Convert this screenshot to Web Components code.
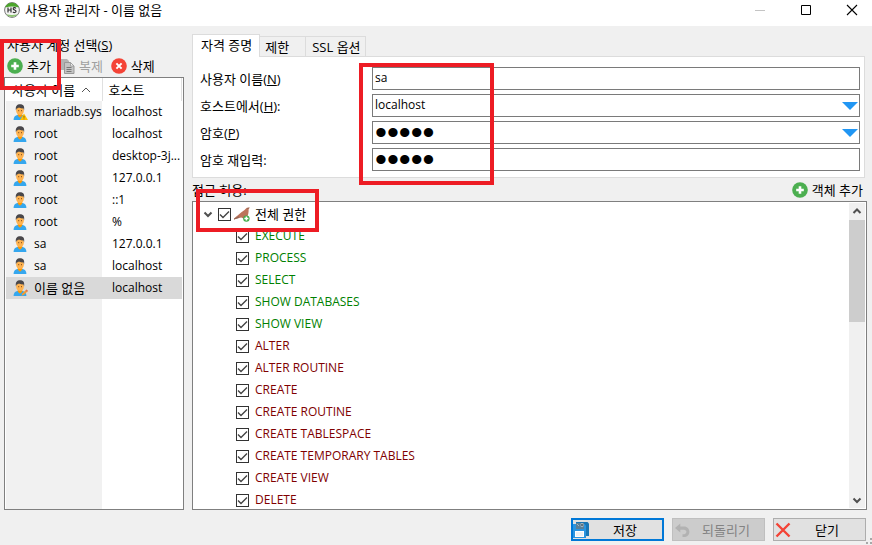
<!DOCTYPE html>
<html lang="ko">
<head>
<meta charset="utf-8">
<title>사용자 관리자 - 이름 없음</title>
<style>
  html, body {
    height: 100%;
    margin: 0;
  }

  body {
    font: 13px/18px "Open Sans", "Noto Sans CJK KR", sans-serif;
    color: #000;
    background: #f0f0f0;
    overflow: hidden;
  }
</style>
</head>
<body>
<user-manager></user-manager>

<script>
const ICONS = {
  app: `<circle cx="8" cy="8" r="7.4" fill="#f4f4f4" stroke="#777" stroke-width="1"/>
    <path d="M1.2 5.4A7.3 7.3 0 0 1 14.8 5.4Q8 3.4 1.2 5.4Z" fill="#4ca52c"/>
    <path d="M2.2 12.2A7.3 7.3 0 0 0 13.8 12.2Q8 13.8 2.2 12.2Z" fill="#8bc46f"/>
    <path d="M4 5.5v5M7 5.5v5M4 8h3M12 6.3C11 5.2 9 5.4 9.2 6.8C9.4 8.2 12 7.8 12 9.3C12 10.8 9.8 10.9 8.9 9.8" fill="none" stroke="#333" stroke-width="1.2"/>`,
  add: `<circle cx="8" cy="8" r="7.8" fill="#4caf50"/>
    <path d="M8 4.2v7.6M4.2 8h7.6" stroke="#fff" stroke-width="2.6"/>`,
  remove: `<circle cx="8" cy="8" r="7.8" fill="#f44336"/>
    <path d="M5.4 5.4l5.2 5.2M10.6 5.4l-5.2 5.2" stroke="#fff" stroke-width="2"/>`,
  copy: `<path d="M2 1h6l2 2v9H2z" fill="#b4b4b4"/>
    <path d="M5.5 4.5h6l3.5 3.5v7.5h-9.5z" fill="#c4c4c4" stroke="#999"/>
    <path d="M11.5 4.5v3.5h3.5z" fill="#eee" stroke="#999" stroke-width=".8"/>
    <path d="M7.5 9.5h5M7.5 11.5h5M7.5 13.5h5" stroke="#777"/>`,
  user: `<path d="M1.6 16C1.6 12.6 3.6 11 8 10.6C12.4 11 14.4 12.6 14.4 16Z" fill="#35a7ee"/>
    <path d="M5.8 9.5h4.4v2.2L8 13.8L5.8 11.7Z" fill="#ff9800"/>
    <ellipse cx="8" cy="6.4" rx="3.9" ry="4.6" fill="#ffb350"/>
    <path d="M3.9 6.2C3.3 2 5 .2 8.2 .2C11.4 .2 12.7 2.2 12.1 6.2L11.3 4.3C9.5 4.6 7.8 4.1 6.9 3.6C6 4.5 4.7 4.6 4.7 4.6Z" fill="#49474a"/>
    <path d="M6.2 6.7h1M9 6.7h1" stroke="#784719" stroke-width="1"/>`,
  warn: `<path d="M12 9.6L16 16H8Z" fill="#ffc107"/><path d="M12 11.8v2M12 14.5v.8" stroke="#775500" stroke-width=".8"/>`,
  pencil: `<path d="M9.5 15.8L10.2 13.6L14.5 9.6L15.9 11L11.7 15.1Z" fill="#f39b32"/><path d="M13.6 10.4L14.5 9.6L15.9 11L15 11.8Z" fill="#d66a62"/>`,
  seal: `<path d="M0 12.4C2.5 10.3 4.3 9.1 6.2 7.2C8.2 5.2 10.5 4.6 11.5 3L12.9 1.8L15.8 1.4L14.6 3.4C14.8 6.2 14.2 9.2 12.8 11.4L10.2 12.8L7.2 11.4L3.2 12.4L0 13.6Z" fill="#bd745b"/>
    <path d="M.2 12.5L5 10.2L4.6 12L0 13.5ZM12.7 2.2l2.8-.6-1.6 1.4Z" fill="#8d6658"/>
    <circle cx="12.4" cy="12.6" r="3.2" fill="#41aa47"/>
    <path d="M12.4 10.6v4M10.4 12.6h4" stroke="#fff" stroke-width="1.5"/>`,
  save: `<path d="M3 0h11.5l1.5 1.5V14H3z" fill="#1976b5"/>
    <path d="M0 2h11.5L13 3.5V16H0z" fill="#2b94df"/>
    <path d="M3 1h8v6H3z" fill="#5b7f97"/><path d="M4 2l2 2M8 1.5h2v3H8z" stroke="#9db4c2" fill="#25333d"/>
    <path d="M2 9h9v6H2z" fill="#fff"/><path d="M3 11h7M3 13h7" stroke="#dde3e8"/>`,
  undo: `<path d="M6.3 1.5L1 6l5.3 4.5V7.7H10c2.7 0 3.5 3.3.5 4.6H8.5v2.7h2.8C17.4 13.7 16.5 4.4 10 4.4H6.3Z" fill="#b2b2b2"/>`,
  cross: `<path d="M1.5 1.5L14.5 14.5M14.5 1.5L1.5 14.5" stroke="#f44336" stroke-width="2.4"/>`,
  minimize: `<path d="M3 8.5h10" stroke="#c4c4c4"/>`,
  maximize: `<path d="M3.5 3.5h9v9h-9z" fill="none" stroke="#000"/>`,
  close: `<path d="M3 3l10 10M13 3L3 13" stroke="#000" stroke-width="1.1"/>`,
  up: `<path d="M4.5 10L8 6.5l3.5 3.5" fill="none" stroke="#505050" stroke-width="2"/>`,
  down: `<path d="M4.5 6.5L8 10l3.5-3.5" fill="none" stroke="#505050" stroke-width="2"/>`,
  sort: `<path d="M4 10l4-4 4 4" fill="none" stroke="#555"/>`,
  drop: `<path d="M0 4h16L8 12z" fill="#2196f3"/>`,
};

const icon = (...names) =>
  `<svg viewBox="0 0 16 16" width="16" height="16" aria-hidden="true">${names.map((n) => ICONS[n]).join("")}</svg>`;

const BASE = `
  * { box-sizing: border-box; }
  svg { display: block; flex: none; }
  button, input { font: inherit; color: inherit; margin: 0; outline: none; }
`;

class TitleBar extends HTMLElement {
  constructor() {
    super();
    this.attachShadow({ mode: "open" }).innerHTML = `
    <style>
      ${BASE}
      :host {
        display: flex;
        align-items: center;
        gap: 5px;
        height: 26px;
        padding-left: 4px;
        padding-bottom: 6px;
        box-sizing: border-box;
        background: #fff;
      }
      h1 { flex: 1; margin: 0; font: inherit; }
      nav { display: flex; gap: 6px; }
      button {
        width: 40px;
        height: 20px;
        padding: 0 12px;
        border: 0;
        background: none;
      }
    </style>
    ${icon("app")}
    <h1><slot></slot></h1>
    <nav>
      <button aria-label="최소화">${icon("minimize")}</button>
      <button aria-label="최대화">${icon("maximize")}</button>
      <button aria-label="창 닫기">${icon("close")}</button>
    </nav>`;
  }
}

class ToolButton extends HTMLElement {
  constructor() {
    super();
    this.attachShadow({ mode: "open" });
  }

  connectedCallback() {
    const disabled = this.hasAttribute("disabled") ? "disabled" : "";
    this.shadowRoot.innerHTML = `
    <style>
      ${BASE}
      :host { display: block; }
      button {
        display: flex;
        align-items: center;
        gap: 4px;
        padding: 0;
        border: 0;
        background: none;
        white-space: nowrap;
      }
      button:disabled { color: #a0a0a0; }
    </style>
    <button ${disabled}>${icon(this.getAttribute("icon"))}<span><slot></slot></span></button>`;
  }
}

class PushButton extends HTMLElement {
  constructor() {
    super();
    this.attachShadow({ mode: "open" });
  }

  connectedCallback() {
    const disabled = this.hasAttribute("disabled") ? "disabled" : "";
    this.shadowRoot.innerHTML = `
    <style>
      ${BASE}
      :host { display: block; width: 93px; }
      button {
        display: flex;
        align-items: center;
        width: 100%;
        height: 23px;
        padding: 0 2px 0 1px;
        border: 1px solid #adadad;
        background: #e1e1e1;
      }
      span { flex: 1; text-align: center; white-space: nowrap; }
      button:disabled { color: #838383; background: #ccc; border-color: #bfbfbf; }
      :host([default]) button { border: 2px solid #0078d7; padding: 0 1px 0 0; }
    </style>
    <button ${disabled}>${icon(this.getAttribute("icon"))}<span><slot></slot></span></button>`;
  }
}

const USERS = [
  ["mariadb.sys", "localhost", "warn"],
  ["root", "localhost"],
  ["root", "desktop-3j..."],
  ["root", "127.0.0.1"],
  ["root", "::1"],
  ["root", "%"],
  ["sa", "127.0.0.1"],
  ["sa", "localhost"],
  ["이름 없음", "localhost", "pencil"],
];

class UserList extends HTMLElement {
  constructor() {
    super();
    const rows = USERS.map(([name, host, badge], i) => `
      <tr class="${i === USERS.length - 1 ? "selected" : ""}">
        <td><div class="name">${icon("user", ...(badge ? [badge] : []))}<span>${name}</span></div></td>
        <td>${host}</td>
      </tr>`).join("");
    this.attachShadow({ mode: "open" }).innerHTML = `
    <style>
      ${BASE}
      :host {
        display: block;
        padding: 0 1px;
        border: 1px solid #7f7f7f;
        background: #fff;
        overflow: hidden;
      }
      .columns {
        height: 100%;
        background: linear-gradient(#f1f1f1, #f1f1f1) 0 0 / 96px 100% no-repeat;
      }
      table { width: 100%; border-collapse: collapse; table-layout: fixed; }
      th, td { padding: 0 0 0 10px; text-align: left; font-weight: normal; white-space: nowrap; }
      th {
        height: 23px;
        padding-left: 6px;
        background: #fff;
        border-right: 1px solid #e0e0e0;
      }
      th:first-child { width: 96px; }
      th > div { display: flex; align-items: center; gap: 3px; }
      td { height: 22px; font-size: 12px; }
      td:first-child { padding-left: 6px; }
      .name { display: flex; align-items: center; gap: 6px; }
      .selected { background: #d9d9d9; }
      .selected .name { font-size: 13px; }
    </style>
    <div class="columns">
      <table>
        <thead><tr><th><div>사용자 이름${icon("sort")}</div></th><th>호스트</th></tr></thead>
        <tbody>${rows}</tbody>
      </table>
    </div>`;
  }
}

class TabPanel extends HTMLElement {
  constructor() {
    super();
    this.attachShadow({ mode: "open" });
  }

  connectedCallback() {
    const tabs = this.getAttribute("tabs").split(",");
    this.shadowRoot.innerHTML = `
    <style>
      ${BASE}
      :host { display: block; }
      .tabs { display: flex; align-items: flex-end; height: 22px; }
      button {
        height: 20px;
        padding: 0 4px 0 5px;
        border: 1px solid #dcdcdc;
        border-width: 1px 1px 0 0;
        background: #f0f0f0;
        text-align: left;
        white-space: nowrap;
      }
      button + button { min-width: 46px; }
      button + button + button { padding-left: 6px; }
      button[aria-selected="true"] {
        height: 23px;
        margin-bottom: -1px;
        padding: 0 7px 2px 8px;
        border-left-width: 1px;
        background: #fff;
        position: relative;
      }
      .page {
        display: grid;
        gap: 4px;
        padding: 10px 4px 6px 7px;
        border: 1px solid #dcdcdc;
        background: #fff;
      }
    </style>
    <div class="tabs" role="tablist">
      ${tabs.map((t, i) => `<button role="tab" aria-selected="${i === 0}">${t}</button>`).join("")}
    </div>
    <div class="page" role="tabpanel"><slot></slot></div>`;
  }
}

class FormField extends HTMLElement {
  constructor() {
    super();
    this.attachShadow({ mode: "open" });
  }

  connectedCallback() {
    const type = this.getAttribute("type") || "text";
    const drop = this.hasAttribute("drop")
      ? `<button aria-label="목록 열기">${icon("drop")}</button>`
      : "";
    this.shadowRoot.innerHTML = `
    <style>
      ${BASE}
      :host { display: grid; grid-template-columns: 172px 1fr; align-items: center; }
      .box {
        display: flex;
        align-items: center;
        height: 23px;
        padding: 0 1px 0 2px;
        border: 1px solid #7a7a7a;
        background: #fff;
      }
      input {
        flex: 1;
        min-width: 0;
        height: 21px;
        padding: 0 0 2px;
        border: 0;
        background: none;
        font-size: 12px;
      }
      input[type="password"] { padding: 0; font: 34px/21px "Liberation Sans", sans-serif; }
      button { padding: 0; border: 0; background: none; }
    </style>
    <label for="field"><slot></slot></label>
    <div class="box"><input id="field" type="${type}" value="${this.getAttribute("value")}">${drop}</div>`;
  }
}

const READ = ["EXECUTE", "PROCESS", "SELECT", "SHOW DATABASES", "SHOW VIEW"];
const WRITE = [
  "ALTER", "ALTER ROUTINE", "CREATE", "CREATE ROUTINE", "CREATE TABLESPACE",
  "CREATE TEMPORARY TABLES", "CREATE VIEW", "DELETE",
];

class PrivilegeTree extends HTMLElement {
  constructor() {
    super();
    const item = (kind) => (name) =>
      `<li><label class="${kind}"><input type="checkbox" checked>${name}</label></li>`;
    this.attachShadow({ mode: "open" }).innerHTML = `
    <style>
      ${BASE}
      :host {
        display: flex;
        padding: 1px;
        border: 1px solid #7f7f7f;
        background: #fff;
        overflow: hidden;
      }
      .tree { flex: 1; overflow: hidden; }
      .root { display: flex; align-items: center; height: 22px; padding-left: 6px; }
      .root button { padding: 0; border: 0; background: none; }
      .root label { gap: 3px; margin-left: 2px; }
      .root span { margin-left: 2px; }
      label { display: flex; align-items: center; gap: 6px; }
      ul { margin: 0; padding: 0 0 0 42px; list-style: none; font-size: 12px; }
      li { display: flex; align-items: center; height: 22px; white-space: nowrap; }
      .read { color: #008000; }
      .write { color: #800000; }
      input {
        appearance: none;
        width: 13px;
        height: 13px;
        border: 1px solid #333;
        background: #fff;
      }
      input:checked {
        background-image: url("data:image/svg+xml,%3Csvg xmlns='http://www.w3.org/2000/svg' viewBox='0 0 11 11'%3E%3Cpath d='M1 5.5L4 8.5L10 2.5' fill='none' stroke='%23444' stroke-width='1.4'/%3E%3C/svg%3E");
      }
      .bar { display: flex; flex-direction: column; width: 16px; background: #f0f0f0; }
      .thumb { height: 102px; margin-top: 1px; background: #cdcdcd; }
      .bar svg:last-child { margin-top: auto; }
    </style>
    <div class="tree">
      <div class="root">
        <button aria-label="접기">${icon("down")}</button>
        <label><input type="checkbox" checked>${icon("seal")}<span>전체 권한</span></label>
      </div>
      <ul>${READ.map(item("read")).join("")}${WRITE.map(item("write")).join("")}</ul>
    </div>
    <div class="bar">${icon("up")}<div class="thumb"></div>${icon("down")}</div>`;
  }
}

// Red frame drawn over the window, placed by its class in the parent
class MarkBox extends HTMLElement {
  constructor() {
    super();
    this.attachShadow({ mode: "open" }).innerHTML = `
    <style>
      :host {
        position: absolute;
        box-sizing: border-box;
        border: 4px solid #ed1c24;
        pointer-events: none;
      }
    </style>`;
  }
}

class UserManager extends HTMLElement {
  constructor() {
    super();
    this.attachShadow({ mode: "open" }).innerHTML = `
    <style>
      ${BASE}
      :host {
        display: flex;
        flex-direction: column;
        height: 100%;
        position: relative;
      }
      main { flex: 1; min-height: 0; display: flex; gap: 8px; padding: 0 5px 0 4px; }
      section { display: flex; flex-direction: column; min-height: 0; }
      .accounts { width: 180px; padding-top: 10px; }
      .accounts > p { margin: 0; padding-left: 3px; }
      .tools { display: flex; align-items: center; gap: 8px; height: 23px; padding-left: 3px; }
      user-list, privilege-tree { flex: 1; min-height: 0; }
      .details { flex: 1; min-width: 0; padding-top: 8px; }
      tab-panel { margin-right: 2px; }
      .access { display: flex; align-items: center; justify-content: space-between; height: 23px; padding-right: 4px; }
      footer { display: flex; justify-content: flex-end; gap: 8px; padding: 8px 6px 4px; }
      .grip { position: absolute; right: 0; bottom: 0; }
      .add-mark { left: 0; top: 39px; width: 61px; height: 51px; }
      .login-mark { left: 359px; top: 63px; width: 135px; height: 122px; }
      .all-mark { left: 196px; top: 189px; width: 123px; height: 43px; }
    </style>
    <title-bar>사용자 관리자 - 이름 없음</title-bar>
    <main>
      <section class="accounts">
        <p>사용자 계정 선택(<u>S</u>)</p>
        <div class="tools">
          <tool-button icon="add">추가</tool-button>
          <tool-button icon="copy" disabled>복제</tool-button>
          <tool-button icon="remove">삭제</tool-button>
        </div>
        <user-list></user-list>
      </section>
      <section class="details">
        <tab-panel tabs="자격 증명,제한,SSL 옵션">
          <form-field value="sa">사용자 이름(<u>N</u>)</form-field>
          <form-field value="localhost" drop>호스트에서(<u>H</u>):</form-field>
          <form-field type="password" value="12345" drop>암호(<u>P</u>)</form-field>
          <form-field type="password" value="12345">암호 재입력:</form-field>
        </tab-panel>
        <div class="access">
          <span>접근 허용:</span>
          <tool-button icon="add">객체 추가</tool-button>
        </div>
        <privilege-tree></privilege-tree>
      </section>
    </main>
    <footer>
      <push-button icon="save" default>저장</push-button>
      <push-button icon="undo" disabled>되돌리기</push-button>
      <push-button icon="cross">닫기</push-button>
    </footer>
    <svg class="grip" viewBox="0 0 8 8" width="8" height="8" aria-hidden="true">
      <path d="M6 1h2v2H6zM6 5h2v2H6zM2 5h2v2H2z" fill="#a8a8a8"/>
    </svg>
    <mark-box class="add-mark"></mark-box>
    <mark-box class="login-mark"></mark-box>
    <mark-box class="all-mark"></mark-box>`;
  }
}

customElements.define("title-bar", TitleBar);
customElements.define("tool-button", ToolButton);
customElements.define("push-button", PushButton);
customElements.define("user-list", UserList);
customElements.define("tab-panel", TabPanel);
customElements.define("form-field", FormField);
customElements.define("privilege-tree", PrivilegeTree);
customElements.define("mark-box", MarkBox);
customElements.define("user-manager", UserManager);
</script>
</body>
</html>
